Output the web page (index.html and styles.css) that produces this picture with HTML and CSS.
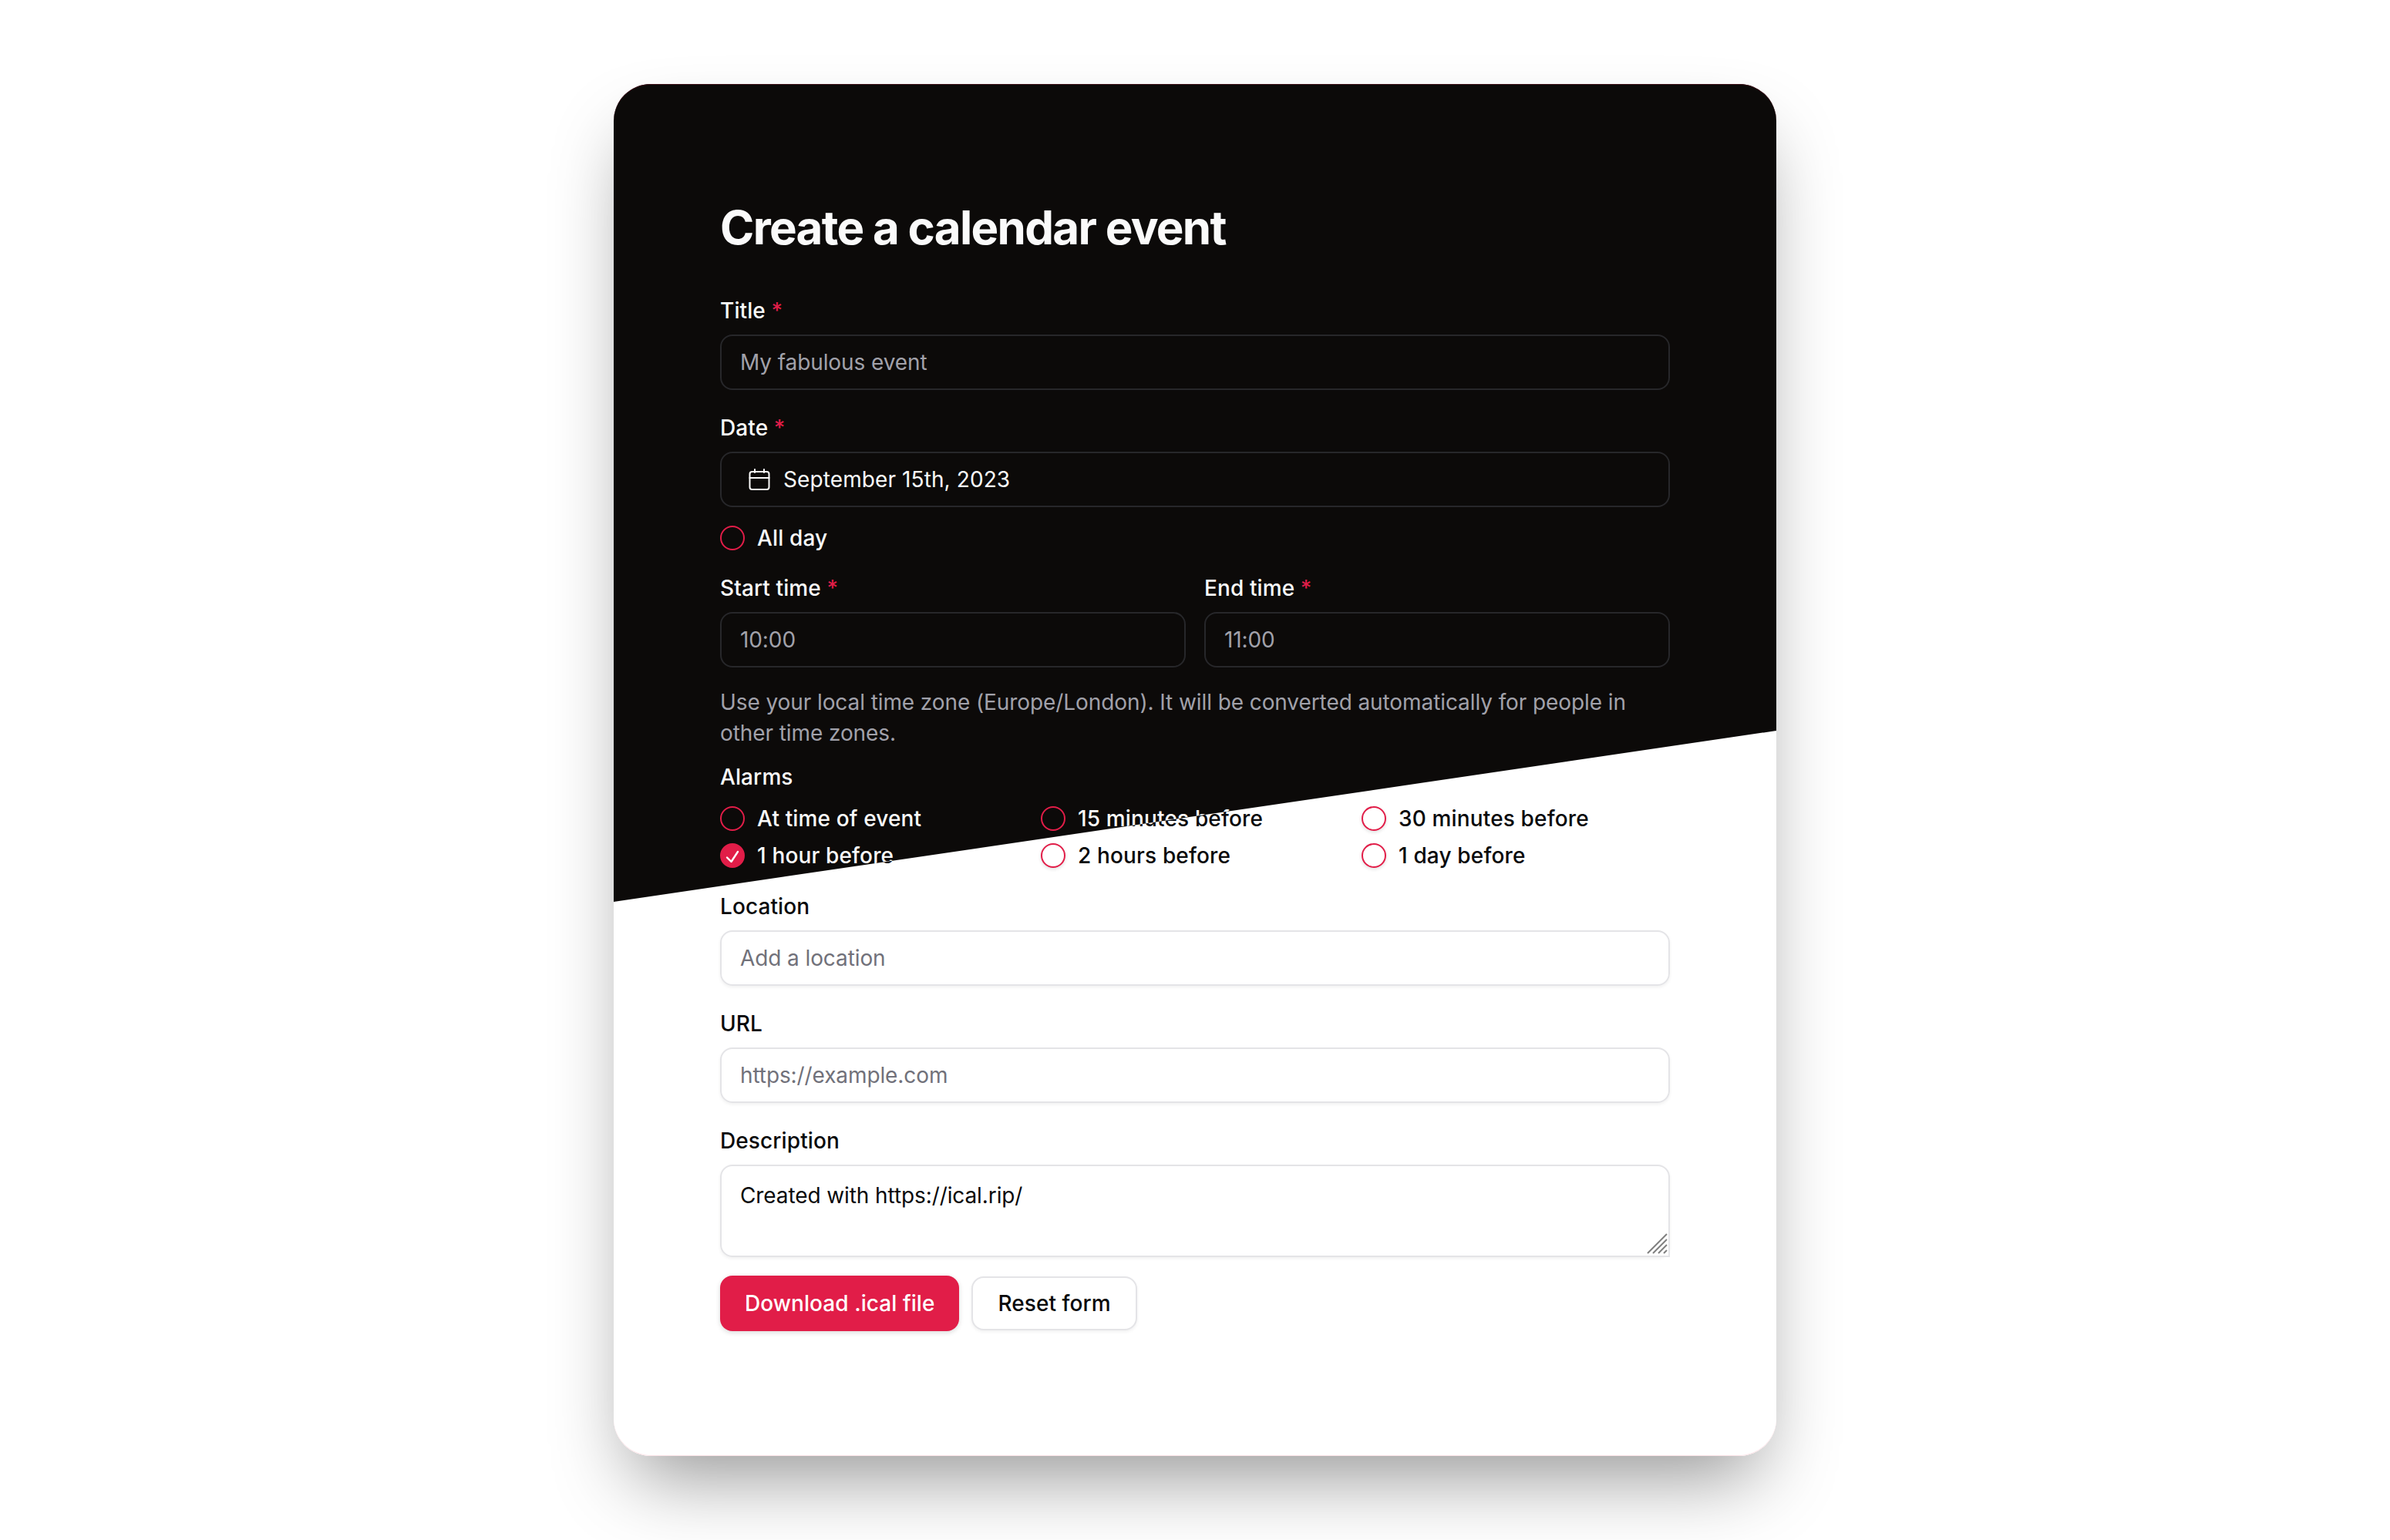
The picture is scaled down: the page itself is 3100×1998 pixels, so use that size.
FILE: index.html
```html
<!DOCTYPE html>
<html lang="en">
<head>
    <meta charset="UTF-8">
    <meta name="viewport" content="width=device-width, initial-scale=1.0">
    <title>Create a calendar event</title>
    <link rel="stylesheet" href="styles.css">
</head>
<body>
    <div class="card">
        <form class="layer light">
            <h1>Create a calendar event</h1>
            <div class="field">
                <label>Title <span class="req">*</span></label>
                <input class="input" type="text" placeholder="My fabulous event">
            </div>
            <div class="field">
                <label>Date <span class="req">*</span></label>
                <div class="input date">
                    <svg class="cal" viewBox="0 0 28 28"><rect x="1.5" y="4" width="25" height="23" rx="3"/><path d="M8 1v4M20 1v4M1.5 12h25"/></svg>
                    <span>September 15th, 2023</span>
                </div>
            </div>
            <div class="check allday"><span class="box"></span>All day</div>
            <div class="times">
                <div class="field">
                    <label>Start time <span class="req">*</span></label>
                    <input class="input" type="text" value="10:00">
                </div>
                <div class="field">
                    <label>End time <span class="req">*</span></label>
                    <input class="input" type="text" value="11:00">
                </div>
            </div>
            <p class="help">Use your local time zone (Europe/London). It will be converted automatically for people in other time zones.</p>
            <div class="alarms">
                <label>Alarms</label>
                <div class="alarm-grid">
                    <div class="check"><span class="box"></span>At time of event</div>
                    <div class="check"><span class="box"></span>15 minutes before</div>
                    <div class="check"><span class="box"></span>30 minutes before</div>
                    <div class="check"><span class="box on"><svg viewBox="2 2 28 28"><path d="M9 18.5L14.5 24L23 11"/></svg></span>1 hour before</div>
                    <div class="check"><span class="box"></span>2 hours before</div>
                    <div class="check"><span class="box"></span>1 day before</div>
                </div>
            </div>
            <div class="field">
                <label>Location</label>
                <input class="input" type="text" placeholder="Add a location">
            </div>
            <div class="field">
                <label>URL</label>
                <input class="input" type="text" placeholder="https://example.com">
            </div>
            <div class="field">
                <label>Description</label>
                <div class="area-wrap">
                    <textarea class="input area">Created with https://ical.rip/</textarea>
                    <svg class="grip" viewBox="0 0 30 30"><path d="M3 27L28 2M10 27L28 9M17 27L28 16M24 27L28 23"/></svg>
                </div>
            </div>
            <div class="buttons">
                <button type="button" class="btn primary">Download .ical file</button>
                <button type="button" class="btn">Reset form</button>
            </div>
        </form>

        <form class="layer dark">
            <h1>Create a calendar event</h1>
            <div class="field">
                <label>Title <span class="req">*</span></label>
                <input class="input" type="text" placeholder="My fabulous event">
            </div>
            <div class="field">
                <label>Date <span class="req">*</span></label>
                <div class="input date">
                    <svg class="cal" viewBox="0 0 28 28"><rect x="1.5" y="4" width="25" height="23" rx="3"/><path d="M8 1v4M20 1v4M1.5 12h25"/></svg>
                    <span>September 15th, 2023</span>
                </div>
            </div>
            <div class="check allday"><span class="box"></span>All day</div>
            <div class="times">
                <div class="field">
                    <label>Start time <span class="req">*</span></label>
                    <input class="input" type="text" value="10:00">
                </div>
                <div class="field">
                    <label>End time <span class="req">*</span></label>
                    <input class="input" type="text" value="11:00">
                </div>
            </div>
            <p class="help">Use your local time zone (Europe/London). It will be converted automatically for people in other time zones.</p>
            <div class="alarms">
                <label>Alarms</label>
                <div class="alarm-grid">
                    <div class="check"><span class="box"></span>At time of event</div>
                    <div class="check"><span class="box"></span>15 minutes before</div>
                    <div class="check"><span class="box"></span>30 minutes before</div>
                    <div class="check"><span class="box on"><svg viewBox="2 2 28 28"><path d="M9 18.5L14.5 24L23 11"/></svg></span>1 hour before</div>
                    <div class="check"><span class="box"></span>2 hours before</div>
                    <div class="check"><span class="box"></span>1 day before</div>
                </div>
            </div>
            <div class="field">
                <label>Location</label>
                <input class="input" type="text" placeholder="Add a location">
            </div>
            <div class="field">
                <label>URL</label>
                <input class="input" type="text" placeholder="https://example.com">
            </div>
            <div class="field">
                <label>Description</label>
                <div class="area-wrap">
                    <textarea class="input area">Created with https://ical.rip/</textarea>
                </div>
            </div>
            <div class="buttons">
                <button type="button" class="btn primary">Download .ical file</button>
                <button type="button" class="btn">Reset form</button>
            </div>
        </form>
    </div>
</body>
</html>
```

FILE: styles.css
```css
* {
    box-sizing: border-box;
}
body {
    font-family: Inter, "Liberation Sans", sans-serif;
    font-size: 28px;
    line-height: 40px;
    background-color: #fff;
    margin: 0;
    min-height: 100vh;
    display: flex;
    justify-content: center;
    align-items: center;
}
.card {
    width: 1508px;
    display: grid;
    border-radius: 48px;
    box-shadow: 0 50px 100px -24px rgba(0, 0, 0, 0.42);
}
.layer {
    grid-area: 1 / 1;
    padding: 150px 138px 162px;
    border-radius: 48px;
}
.light {
    background-color: #fff;
    color: #09090b;
    box-shadow: inset 0 -1px 0 #fbe3e7;
}
.dark {
    background-color: #0c0a09;
    color: #fafafa;
    box-shadow: inset 0 1px 0 #3a0d15;
    clip-path: polygon(0 0, 100% 0, 100% 839px, 0 1061px);
}
h1 {
    font-size: 60px;
    line-height: 72px;
    font-weight: 700;
    letter-spacing: -1.7px;
    margin: 0 0 52px;
}
label {
    display: block;
    font-weight: 500;
    letter-spacing: 0.1px;
    margin-bottom: 11px;
}
.req {
    color: #e11d48;
}
.field {
    margin-bottom: 29px;
}
.input {
    display: flex;
    align-items: center;
    width: 100%;
    height: 72px;
    padding: 0 24px;
    border: 2px solid #e4e4e7;
    border-radius: 16px;
    background: transparent;
    color: inherit;
    font: inherit;
    letter-spacing: -0.1px;
    outline: none;
}
.light .input {
    box-shadow: 0 2px 4px rgba(0, 0, 0, 0.06);
}
.dark .input {
    border-color: #27272a;
    color: #a1a1aa;
}
.light .input::placeholder {
    color: #71717a;
    opacity: 1;
}
.dark .input::placeholder {
    color: #a1a1aa;
    opacity: 1;
}
.dark .date {
    color: #fafafa;
}
.date {
    gap: 17px;
    padding-left: 35px;
    letter-spacing: 0.1px;
}
.cal {
    width: 28px;
    height: 28px;
    fill: none;
    stroke: currentColor;
    stroke-width: 2;
    stroke-linecap: round;
    stroke-linejoin: round;
}
.check {
    display: flex;
    align-items: center;
    gap: 16px;
    font-weight: 500;
    letter-spacing: 0.15px;
    height: 40px;
}
.box {
    width: 32px;
    height: 32px;
    flex: none;
    border: 2px solid #e11d48;
    border-radius: 50%;
}
.light .box {
    box-shadow: 0 2px 4px rgba(0, 0, 0, 0.12);
}
.box.on {
    background-color: #e11d48;
}
.box svg {
    display: block;
    fill: none;
    stroke: #fff;
    stroke-width: 2.4;
    stroke-linecap: round;
    stroke-linejoin: round;
}
.allday {
    margin: -9px 0 25px;
}
.times {
    display: grid;
    grid-template-columns: 1fr 1fr;
    gap: 24px;
}
.times .field {
    margin-bottom: 0;
}
.help {
    margin: 25px 0 17px;
    letter-spacing: -0.09px;
    color: #a1a1aa;
}
.light .help {
    color: #71717a;
}
.alarms {
    margin-bottom: 26px;
}
.alarms label {
    margin-bottom: 14px;
}
.alarm-grid {
    display: grid;
    grid-template-columns: repeat(3, 400px);
    column-gap: 16px;
    row-gap: 8px;
}
.area-wrap {
    position: relative;
}
.area {
    display: block;
    height: 120px;
    padding: 18px 24px;
    resize: none;
}
.grip {
    position: absolute;
    right: 0;
    bottom: 0;
    width: 32px;
    height: 32px;
    background-color: #fff;
    border: solid #e4e4e7;
    border-width: 0 2px 2px 0;
    fill: none;
    stroke: #808080;
    stroke-width: 2;
}
.field:has(.area) {
    margin-bottom: 24px;
}
.buttons {
    display: flex;
    align-items: center;
    gap: 16px;
}
.btn {
    height: 70px;
    padding: 0 32px;
    border: 2px solid #e4e4e7;
    border-radius: 16px;
    background-color: #fff;
    color: #09090b;
    font: inherit;
    font-weight: 500;
    letter-spacing: 0.06px;
    box-shadow: 0 2px 4px rgba(0, 0, 0, 0.06);
}
.primary {
    height: 72px;
    background-color: #e11d48;
    border: none;
    color: #fff;
    box-shadow: 0 2px 6px rgba(0, 0, 0, 0.15);
}
```
